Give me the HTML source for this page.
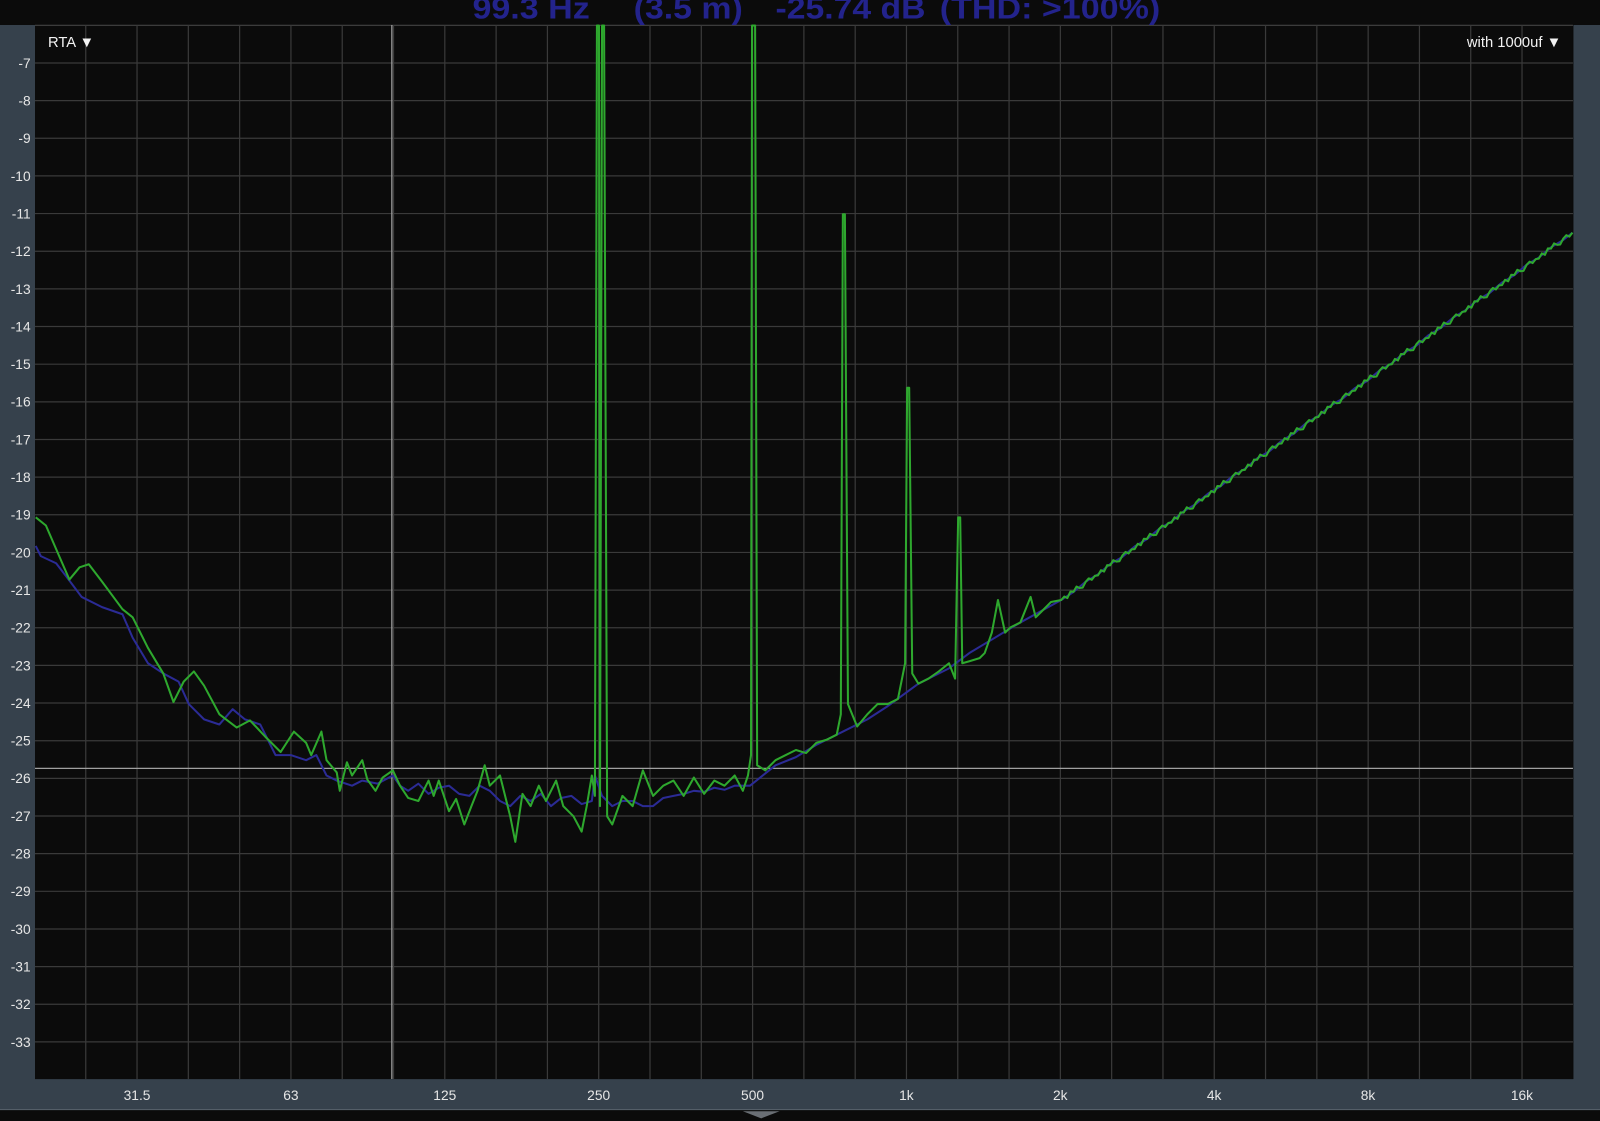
<!DOCTYPE html>
<html><head><meta charset="utf-8"><style>
html,body{margin:0;padding:0;background:#0b0b0b;overflow:hidden}
svg{display:block}
</style></head><body>
<svg width="1600" height="1121" viewBox="0 0 1568 1098.6" preserveAspectRatio="none" xmlns="http://www.w3.org/2000/svg" font-family="Liberation Sans, sans-serif">
<rect x="0" y="0" width="1568" height="1099" fill="#0b0b0b"/>
<rect x="0" y="24.5" width="34.3" height="1063" fill="#36414c"/>
<rect x="1542" y="24.5" width="26" height="1063" fill="#36414c"/>
<rect x="0" y="1057.5" width="1568" height="30" fill="#36414c"/>
<line x1="0" y1="1087.5" x2="1568" y2="1087.5" stroke="#58626c" stroke-width="1"/>
<polygon points="728,1089 764,1089 746,1096" fill="#6a6f75"/>
<rect x="34.3" y="24.5" width="1507.2" height="1033" fill="#0b0b0b"/>
<line x1="34.3" y1="24.8" x2="1541.5" y2="24.8" stroke="#444" stroke-width="1"/>
<g stroke="#3a3a3a" stroke-width="1.2">
<line x1="34.3" x2="1541.5" y1="61.7" y2="61.7"/><line x1="34.3" x2="1541.5" y1="98.6" y2="98.6"/><line x1="34.3" x2="1541.5" y1="135.5" y2="135.5"/><line x1="34.3" x2="1541.5" y1="172.4" y2="172.4"/><line x1="34.3" x2="1541.5" y1="209.3" y2="209.3"/><line x1="34.3" x2="1541.5" y1="246.2" y2="246.2"/><line x1="34.3" x2="1541.5" y1="283.1" y2="283.1"/><line x1="34.3" x2="1541.5" y1="320" y2="320"/><line x1="34.3" x2="1541.5" y1="356.9" y2="356.9"/><line x1="34.3" x2="1541.5" y1="393.8" y2="393.8"/><line x1="34.3" x2="1541.5" y1="430.7" y2="430.7"/><line x1="34.3" x2="1541.5" y1="467.6" y2="467.6"/><line x1="34.3" x2="1541.5" y1="504.5" y2="504.5"/><line x1="34.3" x2="1541.5" y1="541.4" y2="541.4"/><line x1="34.3" x2="1541.5" y1="578.3" y2="578.3"/><line x1="34.3" x2="1541.5" y1="615.2" y2="615.2"/><line x1="34.3" x2="1541.5" y1="652.1" y2="652.1"/><line x1="34.3" x2="1541.5" y1="689" y2="689"/><line x1="34.3" x2="1541.5" y1="725.9" y2="725.9"/><line x1="34.3" x2="1541.5" y1="762.8" y2="762.8"/><line x1="34.3" x2="1541.5" y1="799.7" y2="799.7"/><line x1="34.3" x2="1541.5" y1="836.6" y2="836.6"/><line x1="34.3" x2="1541.5" y1="873.5" y2="873.5"/><line x1="34.3" x2="1541.5" y1="910.4" y2="910.4"/><line x1="34.3" x2="1541.5" y1="947.3" y2="947.3"/><line x1="34.3" x2="1541.5" y1="984.2" y2="984.2"/><line x1="34.3" x2="1541.5" y1="1021.1" y2="1021.1"/>
</g>
<g stroke="#3a3a3a" stroke-width="1.2" id="vg"></g>
<g fill="#e6e6e6" font-size="13.5" text-anchor="end">
<text x="30" y="66.5">-7</text><text x="30" y="103.4">-8</text><text x="30" y="140.3">-9</text><text x="30" y="177.2">-10</text><text x="30" y="214.1">-11</text><text x="30" y="251">-12</text><text x="30" y="287.9">-13</text><text x="30" y="324.8">-14</text><text x="30" y="361.7">-15</text><text x="30" y="398.6">-16</text><text x="30" y="435.5">-17</text><text x="30" y="472.4">-18</text><text x="30" y="509.3">-19</text><text x="30" y="546.2">-20</text><text x="30" y="583.1">-21</text><text x="30" y="620">-22</text><text x="30" y="656.9">-23</text><text x="30" y="693.8">-24</text><text x="30" y="730.7">-25</text><text x="30" y="767.6">-26</text><text x="30" y="804.5">-27</text><text x="30" y="841.4">-28</text><text x="30" y="878.3">-29</text><text x="30" y="915.2">-30</text><text x="30" y="952.1">-31</text><text x="30" y="989">-32</text><text x="30" y="1025.9">-33</text>
</g>
<g fill="#e6e6e6" font-size="13.5" text-anchor="middle">
<text x="134.3" y="1078">31.5</text><text x="285.1" y="1078">63</text><text x="435.9" y="1078">125</text>
<text x="586.7" y="1078">250</text><text x="737.5" y="1078">500</text><text x="888.3" y="1078">1k</text>
<text x="1039.1" y="1078">2k</text><text x="1189.9" y="1078">4k</text><text x="1340.7" y="1078">8k</text><text x="1491.5" y="1078">16k</text>
</g>
<line x1="384" y1="24.5" x2="384" y2="1057.5" stroke="#9a9a9a" stroke-width="1.3"/>
<line x1="34.3" y1="753" x2="1541.5" y2="753" stroke="#a0a0a0" stroke-width="1.3"/>
<polyline id="blue" fill="none" stroke="#2b2b95" stroke-width="2" stroke-linejoin="round" points="35,535 40,545 55,552 65,565 80,585 100,595 120,602 130,625 145,650 160,660 175,668 185,690 200,705 215,710 228,695 240,705 255,710 270,740 285,740 300,745 310,740 320,760 330,765 345,770 355,765 370,768 385,760 392,770 400,775 410,768 420,778 430,772 440,770 450,778 460,780 470,770 480,775 490,785 500,790 510,780 520,785 530,778 540,790 550,782 560,780 570,788 580,785 583,760 590,780 600,790 610,785 620,785 630,790 640,790 650,782 660,780 670,778 680,775 690,776 700,772 710,774 720,770 735,770 760,750 780,742 800,730 820,720 850,705 870,692 900,670 930,655 950,640 980,622 1000,610 1040,588"/>
<polyline id="green" fill="none" stroke="#2ea82e" stroke-width="2" stroke-linejoin="round" points="35,507 45,515 58,545 68,568 78,556 87,553 100,570 120,597 130,605 145,635 160,660 170,688 180,668 190,658 200,672 215,700 232,713 245,706 260,722 275,737 288,717 300,728 305,740 315,717 320,745 330,757 333,775 340,747 345,760 355,745 360,764 368,775 375,762 385,755 392,770 400,782 410,785 420,765 425,780 430,765 440,795 447,783 455,808 462,790 468,775 475,750 480,770 490,760 495,780 500,800 505,825 512,778 520,790 528,770 535,785 545,765 552,790 562,800 570,815 575,790 580,760 583,780 585,25 587,25 588,790 590,25 592,25 595,800 600,808 610,780 620,790 630,755 640,780 650,770 660,765 670,780 680,762 690,778 700,765 710,770 720,760 728,775 733,760 736,740 737,25 740,25 742,750 750,755 760,745 770,740 780,735 790,738 800,728 810,725 820,720 824,700 826,210 828,210 831,690 840,712 850,700 860,690 870,690 880,685 887,650 889,380 891,380 894,660 900,670 910,665 920,658 930,650 936,665 939,507 941,507 943,650 950,648 960,645 965,640 972,620 978,588 985,620 990,615 1000,610 1010,585 1015,605 1020,600 1030,590 1040,588"/>
<text x="47" y="46" fill="#f2f2f2" font-size="14.5">RTA ▼</text>
<text x="1530" y="46" fill="#f2f2f2" font-size="14.5" text-anchor="end">with 1000uf ▼</text>
<g fill="#23238c" font-size="30" font-weight="bold">
<text x="463" y="18" textLength="115" lengthAdjust="spacingAndGlyphs">99.3 Hz</text>
<text x="621" y="18" textLength="107" lengthAdjust="spacingAndGlyphs">(3.5 m)</text>
<text x="760" y="18" textLength="147" lengthAdjust="spacingAndGlyphs">-25.74 dB</text>
<text x="921" y="18" textLength="216" lengthAdjust="spacingAndGlyphs">(THD: &gt;100%)</text>
</g>
</svg>
<script>
(function(){
var g=document.getElementById('vg'),ns='http://www.w3.org/2000/svg';
for(var k=-1;k<=27;k++){var x=134.3+k*50.27;if(x<35)continue;var l=document.createElementNS(ns,'line');
l.setAttribute('x1',x);l.setAttribute('x2',x);l.setAttribute('y1',24.5);l.setAttribute('y2',1057.5);g.appendChild(l);}
var gp=document.getElementById('green'),bp=document.getElementById('blue');
var gs=gp.getAttribute('points'),bs=bp.getAttribute('points');
var j=[1.5,-1,2,-1.5,0.5,-2,1,2.5,-0.5,-1.5,1.5,0];
for(var i=1;i<=167;i++){var x=1040+i*3;if(x>1541)x=1541;var b=588-0.7186*(x-1040);
gs+=' '+x+','+(b+j[i%12]*1.2).toFixed(1);
if(i%4==0)bs+=' '+x+','+(b+(i%8?0.8:-0.8)).toFixed(1);}
bs+=' 1541,228';
gp.setAttribute('points',gs);bp.setAttribute('points',bs);
})();
</script>
</body></html>
